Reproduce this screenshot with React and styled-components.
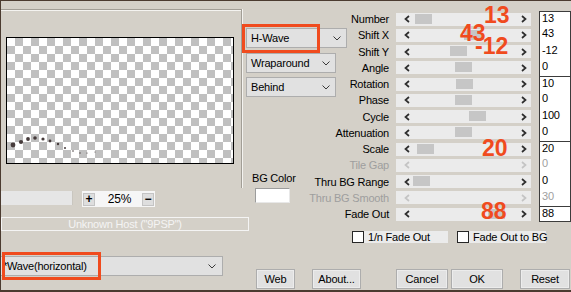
import React from "react";
import styled, { createGlobalStyle } from "styled-components";

const GlobalStyle = createGlobalStyle`
  html, body {
    margin: 0;
    padding: 0;
    background: #d4d0c8;
  }
  body {
    font-family: "Liberation Sans", Arial, sans-serif;
    font-size: 11px;
    letter-spacing: -0.2px;
    color: #000;
  }
  * {
    box-sizing: border-box;
  }
`;

const params = [
  { label: "Number", value: "13", thumb: 19, top: true },
  { label: "Shift X", value: "43", thumb: 68 },
  { label: "Shift Y", value: "-12", thumb: 54 },
  { label: "Angle", value: "0", thumb: 59 },
  { label: "Rotation", value: "10", thumb: 60, top: true },
  { label: "Phase", value: "0", thumb: 59 },
  { label: "Cycle", value: "100", thumb: 73 },
  { label: "Attenuation", value: "0", thumb: 59 },
  { label: "Scale", value: "20", thumb: 21, top: true },
  { label: "Tile Gap", value: "0", disabled: true },
  { label: "Thru BG Range", value: "0", thumb: 17 },
  { label: "Thru BG Smooth", value: "30", disabled: true },
  { label: "Fade Out", value: "88", thumb: 92, top: true, bottom: true },
];

const notes = [
  { text: "13", x: 483, y: 3 },
  { text: "43", x: 459, y: 21 },
  { text: "-12", x: 474, y: 34 },
  { text: "20", x: 481, y: 136 },
  { text: "88", x: 480, y: 199 },
];

const dots = [
  [6, 107, 2.4],
  [14, 104, 2.1],
  [21, 101, 1.9],
  [28, 100, 1.8],
  [36, 101, 1.6],
  [43, 103, 1.4],
  [51, 106, 1.2],
  [58, 110, 1],
  [66, 113, 0.8],
  [73, 115, 0.7],
  [80, 115, 0.6],
  [88, 114, 0.5],
];

const Chevron = () => (
  <svg width="8" height="5" viewBox="0 0 8 5">
    <polyline points="0.5,0.5 4,4 7.5,0.5" fill="none" stroke="#3a3a3a" strokeWidth="1" />
  </svg>
);

const Arrow = ({ dir, off }) => (
  <svg width="6" height="8" viewBox="0 0 6 8">
    <polyline
      points={dir === "left" ? "5,1 1.5,4 5,7" : "1,1 4.5,4 1,7"}
      fill="none"
      stroke={off ? "#c4c4c4" : "#2e2e2e"}
      strokeWidth="1.7"
    />
  </svg>
);

const Select = ({ width, mt, pad, children }) => (
  <SelectBox $width={width} $mt={mt} $pad={pad}>
    <span>{children}</span>
    <Chevron />
  </SelectBox>
);

const App = () => {
  return (
    <>
      <GlobalStyle />
      <Window>
        <LeftCol>
          <PreviewGroup>
            <Preview>
              <svg width="226" height="125">
                {dots.map(([x, y, r], i) => (
                  <circle key={i} cx={x} cy={y} r={r} fill="#463b3b" />
                ))}
              </svg>
            </Preview>
          </PreviewGroup>
          <ZoomRow>
            <ZoomField />
            <ZoomControls>
              <ZoomButton>+</ZoomButton>
              <ZoomText>25%</ZoomText>
              <ZoomButton>−</ZoomButton>
            </ZoomControls>
          </ZoomRow>
          <HostBox>Unknown Host ("9PSP")</HostBox>
          <FilterSelect>
            <span>*Wave(horizontal)</span>
            <Chevron />
          </FilterSelect>
          <Highlight $x={1} $y={251} $w={99} $h={28} />
        </LeftCol>

        <MidCol>
          <Select width={101} pad={4}>H-Wave</Select>
          <Select width={90} mt={5} pad={4}>Wraparound</Select>
          <Select width={90} mt={4} pad={4}>Behind</Select>
          <BgLabel>BG Color</BgLabel>
          <Swatch />
          <Highlight $x={-4} $y={23} $w={78} $h={29} />
        </MidCol>

        <RightCol>
          <Params>
            {params.map((p) => (
              <React.Fragment key={p.label}>
                <Label $off={p.disabled}>{p.label}</Label>
                <Track>
                  <Arrow dir="left" off={p.disabled} />
                  {!p.disabled && <Thumb style={{ left: p.thumb }} />}
                  <Arrow dir="right" off={p.disabled} />
                </Track>
                <Value $off={p.disabled} $top={p.top} $bottom={p.bottom}>
                  {p.value}
                </Value>
              </React.Fragment>
            ))}
          </Params>
          <CheckRow>
            <CheckItem>
              <Box />
              <CheckLabel $width={84}>1/n Fade Out</CheckLabel>
            </CheckItem>
            <CheckItem>
              <Box />
              <CheckLabel $width={77}>Fade Out to BG</CheckLabel>
            </CheckItem>
          </CheckRow>
        </RightCol>

        <ButtonRow>
          <Button $w={39} $ml={0}>Web</Button>
          <Button $w={49} $ml={17}>About...</Button>
          <Button $w={52} $ml={35}>Cancel</Button>
          <Button $w={52} $ml={3}>OK</Button>
          <Button $w={50} $ml={17}>Reset</Button>
        </ButtonRow>

        {notes.map((n) => (
          <Note key={n.text} style={{ left: n.x, top: n.y }}>
            {n.text}
          </Note>
        ))}
      </Window>
    </>
  );
};

export default App;

const Window = styled.div`
  position: relative;
  width: 571px;
  height: 292px;
  overflow: hidden;
  background: #d4d0c8;
  border-top: 1px solid #4b3b30;
  border-left: 1px solid #4b3b30;
  border-bottom: 2px solid #4b3b30;
  display: grid;
  grid-template-columns: 245px 104px 1fr;
  grid-template-rows: 1fr auto;
`;

const LeftCol = styled.div`
  position: relative;
  grid-row: 1 / 3;
  display: flex;
  flex-direction: column;
  align-items: flex-start;
  padding-top: 8px;
`;

const PreviewGroup = styled.div`
  width: 241px;
  height: 179px;
  border-top: 1px solid #a29e96;
  border-right: 1px solid #a29e96;
  box-shadow: inset 0 1px 0 #f4f3f0, 1px 0 0 #f4f3f0;
  padding: 27px 0 0 5px;
`;

const Preview = styled.div`
  width: 228px;
  height: 127px;
  border: 1px solid #000;
  background: repeating-conic-gradient(#c0c0c0 0 25%, #ffffff 0 50%) 0 0 / 16px 16px;

  svg {
    display: block;
  }
`;

const ZoomRow = styled.div`
  margin-top: 3px;
  height: 16px;
  display: flex;
  align-items: flex-start;
`;

const ZoomField = styled.div`
  width: 72px;
  height: 14px;
  background: #e6e6e6;
  border-right: 1px solid #c9c6bf;
`;

const ZoomControls = styled.div`
  margin-left: 9px;
  width: 73px;
  height: 16px;
  background: #f6f6f6;
  display: flex;
  align-items: center;
  justify-content: space-between;
  padding: 0 1px;
`;

const ZoomButton = styled.div`
  width: 12px;
  height: 13px;
  background: #dedede;
  border: 1px solid #c4c4c4;
  display: flex;
  align-items: center;
  justify-content: center;
  font-size: 12px;
  font-weight: bold;
  line-height: 1;
`;

const ZoomText = styled.span`
  font-size: 12px;
  margin-left: 2px;
`;

const HostBox = styled.div`
  margin-top: 10px;
  width: 248px;
  height: 14px;
  border: 1px solid #f4f4f4;
  color: #f4f4f4;
  text-align: center;
  line-height: 12px;
`;

const SelectBox = styled.div`
  width: ${({ $width }) => $width}px;
  height: 20px;
  margin-top: ${({ $mt }) => $mt || 0}px;
  display: flex;
  align-items: center;
  justify-content: space-between;
  padding: 0 5px 0 ${({ $pad }) => $pad ?? 5}px;
  background: #e1e1e1;
  border: 1px solid #adadad;
  white-space: nowrap;

  svg {
    flex-shrink: 0;
  }
`;

const FilterSelect = styled(SelectBox)`
  margin-top: 25px;
  width: 222px;
  padding: 0 6px 0 2px;
  border-left: none;
`;

const Highlight = styled.div`
  position: absolute;
  left: ${({ $x }) => $x}px;
  top: ${({ $y }) => $y}px;
  width: ${({ $w }) => $w}px;
  height: ${({ $h }) => $h}px;
  border: 3px solid #f04b1e;
  pointer-events: none;
`;

const MidCol = styled.div`
  position: relative;
  display: flex;
  flex-direction: column;
  align-items: flex-start;
  padding-top: 27px;
`;

const BgLabel = styled.div`
  margin: 75px 0 0 6px;
  line-height: 13px;
`;

const Swatch = styled.div`
  margin: 3px 0 0 9px;
  width: 35px;
  height: 15px;
  background: #fff;
  border: 1px solid #9c9c9c;
  border-right-color: #e8e8e8;
  border-bottom-color: #e8e8e8;
`;

const RightCol = styled.div`
  display: flex;
  flex-direction: column;
  padding-top: 10px;
`;

const Params = styled.div`
  display: grid;
  grid-template-columns: 46px 135px 40px;
  grid-auto-rows: 16.25px;
`;

const Label = styled.div`
  display: flex;
  justify-content: flex-end;
  align-items: center;
  padding-right: 7px;
  white-space: nowrap;
  color: ${({ $off }) => ($off ? "#9e9e9e" : "#000")};
`;

const Track = styled.div`
  position: relative;
  align-self: center;
  height: 13px;
  background: #ebebeb;
  display: flex;
  align-items: center;
  justify-content: space-between;
  padding: 0 4px 0 8px;

  svg {
    position: relative;
    z-index: 1;
  }
`;

const Thumb = styled.div`
  position: absolute;
  top: 1px;
  width: 17px;
  height: 10px;
  background: #c6c6c6;
`;

const Value = styled.div`
  margin-left: 8px;
  background: #fff;
  border-left: 1px solid #3c3c3c;
  border-right: 1px solid #3c3c3c;
  border-top: ${({ $top }) => ($top ? "1px solid #3c3c3c" : "none")};
  border-bottom: ${({ $bottom }) => ($bottom ? "1px solid #3c3c3c" : "none")};
  padding-left: 2px;
  line-height: 12px;
  font-size: 11px;
  color: ${({ $off }) => ($off ? "#a0a0a0" : "#000")};
`;

const CheckRow = styled.div`
  margin-top: 9px;
  padding-left: 2px;
  display: flex;
  gap: 9px;
`;

const CheckItem = styled.div`
  display: flex;
  align-items: center;
`;

const Box = styled.div`
  width: 12px;
  height: 12px;
  background: #fff;
  border: 1px solid #262626;
`;

const CheckLabel = styled.div`
  width: ${({ $width }) => $width}px;
  height: 12px;
  line-height: 12px;
  padding-left: 4px;
  background: #ebebeb;
  white-space: nowrap;
`;

const ButtonRow = styled.div`
  grid-column: 2 / 4;
  display: flex;
  align-items: flex-end;
  padding: 0 0 1px 10px;
`;

const Button = styled.div`
  width: ${({ $w }) => $w}px;
  margin-left: ${({ $ml }) => $ml}px;
  height: 20px;
  background: #e1e1e1;
  border: 1px solid #adadad;
  box-shadow: inset 0 0 0 1px #ececec;
  display: flex;
  align-items: center;
  justify-content: center;
`;

const Note = styled.div`
  position: absolute;
  font-size: 23px;
  font-weight: bold;
  line-height: 23px;
  letter-spacing: 0;
  color: #f04b1e;
  white-space: nowrap;
  pointer-events: none;
`;
